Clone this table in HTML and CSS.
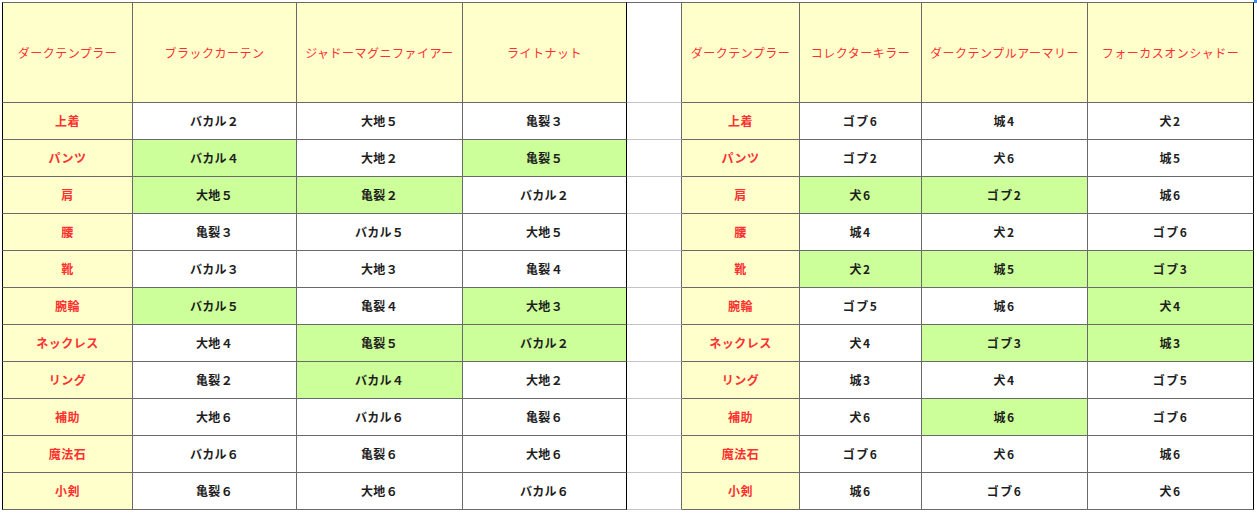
FILE: index.html
```html
<!DOCTYPE html>
<html lang="ja">
<head>
<meta charset="utf-8">
<title>装備表</title>
<link rel="stylesheet" href="styles.css">
</head>
<body>
<table class="sheet">
  <tr class="head">
    <td class="c1 lbl edge-l">ダークテンプラー</td>
    <td class="c2 hd">ブラックカーテン</td>
    <td class="c3 hd">ジャドーマグニファイアー</td>
    <td class="c4 hd edge-r">ライトナット</td>
    <td class="gap"></td>
    <td class="c6 lbl">ダークテンプラー</td>
    <td class="c7 hd">コレクターキラー</td>
    <td class="c8 hd">ダークテンプルアーマリー</td>
    <td class="c9 hd edge-r">フォーカスオンシャドー</td>
  </tr>
  <tr>
    <td class="rl edge-l">上着</td><td>バカル２</td><td>大地５</td><td class="edge-r">亀裂３</td>
    <td class="gap"></td>
    <td class="rl">上着</td><td class="n">ゴブ6</td><td class="n">城4</td><td class="n edge-r">犬2</td>
  </tr>
  <tr>
    <td class="rl edge-l">パンツ</td><td class="g">バカル４</td><td>大地２</td><td class="g edge-r">亀裂５</td>
    <td class="gap"></td>
    <td class="rl">パンツ</td><td class="n">ゴブ2</td><td class="n">犬6</td><td class="n edge-r">城5</td>
  </tr>
  <tr>
    <td class="rl edge-l">肩</td><td class="g">大地５</td><td class="g">亀裂２</td><td class="edge-r">バカル２</td>
    <td class="gap"></td>
    <td class="rl">肩</td><td class="n g">犬6</td><td class="n g">ゴブ2</td><td class="n edge-r">城6</td>
  </tr>
  <tr>
    <td class="rl edge-l">腰</td><td>亀裂３</td><td>バカル５</td><td class="edge-r">大地５</td>
    <td class="gap"></td>
    <td class="rl">腰</td><td class="n">城4</td><td class="n">犬2</td><td class="n edge-r">ゴブ6</td>
  </tr>
  <tr>
    <td class="rl edge-l">靴</td><td>バカル３</td><td>大地３</td><td class="edge-r">亀裂４</td>
    <td class="gap"></td>
    <td class="rl">靴</td><td class="n g">犬2</td><td class="n g">城5</td><td class="n g edge-r">ゴブ3</td>
  </tr>
  <tr>
    <td class="rl edge-l">腕輪</td><td class="g">バカル５</td><td>亀裂４</td><td class="g edge-r">大地３</td>
    <td class="gap"></td>
    <td class="rl">腕輪</td><td class="n">ゴブ5</td><td class="n">城6</td><td class="n g edge-r">犬4</td>
  </tr>
  <tr>
    <td class="rl edge-l">ネックレス</td><td>大地４</td><td class="g">亀裂５</td><td class="g edge-r">バカル２</td>
    <td class="gap"></td>
    <td class="rl">ネックレス</td><td class="n">犬4</td><td class="n g">ゴブ3</td><td class="n g edge-r">城3</td>
  </tr>
  <tr>
    <td class="rl edge-l">リング</td><td>亀裂２</td><td class="g">バカル４</td><td class="edge-r">大地２</td>
    <td class="gap"></td>
    <td class="rl">リング</td><td class="n">城3</td><td class="n">犬4</td><td class="n edge-r">ゴブ5</td>
  </tr>
  <tr>
    <td class="rl edge-l">補助</td><td>大地６</td><td>バカル６</td><td class="edge-r">亀裂６</td>
    <td class="gap"></td>
    <td class="rl">補助</td><td class="n">犬6</td><td class="n g">城6</td><td class="n edge-r">ゴブ6</td>
  </tr>
  <tr>
    <td class="rl edge-l">魔法石</td><td>バカル６</td><td>亀裂６</td><td class="edge-r">大地６</td>
    <td class="gap"></td>
    <td class="rl">魔法石</td><td class="n">ゴブ6</td><td class="n">犬6</td><td class="n edge-r">城6</td>
  </tr>
  <tr>
    <td class="rl edge-l">小剣</td><td>亀裂６</td><td>大地６</td><td class="edge-r">バカル６</td>
    <td class="gap"></td>
    <td class="rl">小剣</td><td class="n">城6</td><td class="n">ゴブ6</td><td class="n edge-r">犬6</td>
  </tr>
</table>
<div class="handle"></div>
</body>
</html>
```

FILE: styles.css
```css
html, body {
  margin: 0;
  padding: 0;
  background: #ffffff;
}

body {
  padding: 2px 0 0 2px;
  font-family: "Noto Sans CJK JP", "Noto Sans", sans-serif;
  position: relative;
}

.sheet {
  border-collapse: separate;
  border-spacing: 0;
  table-layout: fixed;
  width: 1252px;
}

.sheet td {
  box-sizing: border-box;
  height: 37px;
  padding: 0;
  text-align: center;
  vertical-align: middle;
  border-right: 1px solid #6a6a6a;
  border-bottom: 1px solid #6a6a6a;
  font-size: 12px;
  font-weight: 700;
  color: #1e1e1e;
  background: #ffffff;
  white-space: nowrap;
  overflow: hidden;
  line-height: 14px;
  letter-spacing: 0.3px;
}

.sheet td.n {
  letter-spacing: 1.5px;
}

.sheet .head td {
  height: 101px;
  border-top: 1px solid #6a6a6a;
  background: #ffffcc;
  color: #ff3030;
  font-weight: 400;
  letter-spacing: 0.5px;
}

.c1 { width: 131px; }
.c2 { width: 164px; }
.c3 { width: 166px; }
.c4 { width: 164px; }
.gap { width: 55px; }
.c6 { width: 118px; }
.c7 { width: 122px; }
.c8 { width: 166px; }
.c9 { width: 166px; }

.sheet td.edge-l {
  border-left: 1px solid #000000;
}

.sheet td.edge-r {
  border-right: 1px solid #000000;
}

.sheet td.gap,
.sheet .head td.gap {
  background: #ffffff;
  border-bottom-color: #c4c4c4;
}

.sheet td.rl {
  background: #ffffcc;
  color: #ff3030;
  font-weight: 700;
  letter-spacing: 0.5px;
}

.sheet td.g {
  background: #ccff99;
}

.handle {
  position: absolute;
  top: 0;
  left: 1254px;
  width: 3px;
  height: 3px;
  background: #3b8de8;
}
```
